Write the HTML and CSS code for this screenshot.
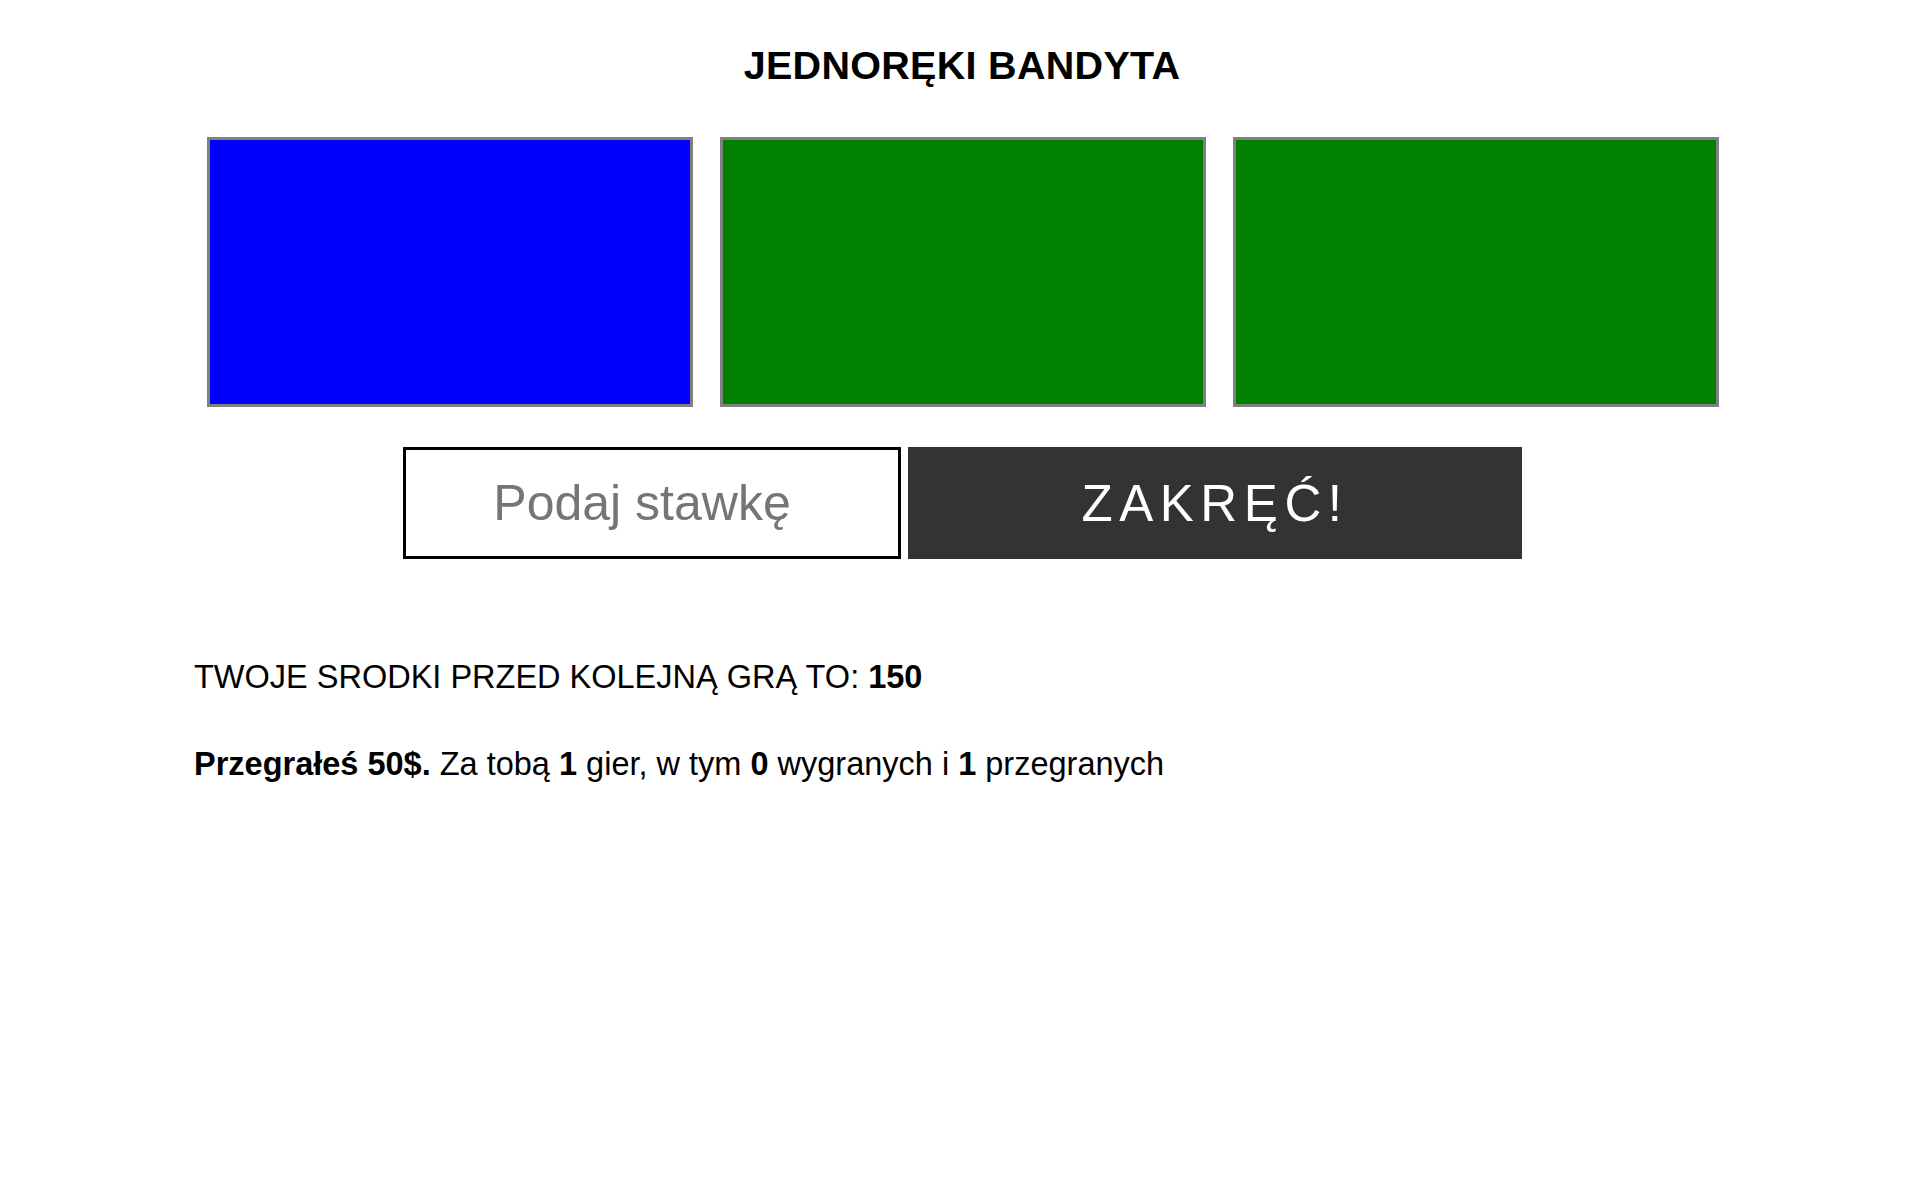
FILE: index.html
```html
<!DOCTYPE html>
<html lang="pl">
<head>
<meta charset="utf-8">
<title>Jednoręki bandyta</title>
<link rel="stylesheet" href="styles.css">
</head>
<body>
<h1 class="title">JEDNORĘKI BANDYTA</h1>
<div class="reels">
  <div class="reel reel-blue"></div>
  <div class="reel reel-green"></div>
  <div class="reel reel-green"></div>
</div>
<div class="controls">
  <input class="bet" type="text" placeholder="Podaj stawkę">
  <button class="spin">ZAKRĘĆ!</button>
</div>
<div class="stats">
  <p class="line">TWOJE SRODKI PRZED KOLEJNĄ GRĄ TO: <b>150</b></p>
  <p class="line"><b>Przegrałeś 50$.</b> Za tobą <b>1</b> gier, w tym <b>0</b> wygranych i <b>1</b> przegranych</p>
</div>
</body>
</html>
```
FILE: styles.css
```css
html, body {
  margin: 0;
  padding: 0;
  background: #ffffff;
}
body {
  font-family: "Liberation Sans", Arial, sans-serif;
  color: #000000;
}
.title {
  margin: 43px 0 0;
  padding-left: 4px;
  font-size: 39.5px;
  line-height: 44px;
  font-weight: bold;
  letter-spacing: 0.3px;
  text-align: center;
}
.reels {
  display: flex;
  justify-content: center;
  gap: 27px;
  margin-top: 50px;
  padding-left: 5px;
}
.reel {
  box-sizing: border-box;
  width: 486px;
  height: 270px;
  border: 3px solid #808080;
}
.reel-blue { background: #0000ff; }
.reel-green { background: #008000; }
.controls {
  display: flex;
  justify-content: center;
  gap: 7px;
  margin-top: 40px;
  padding-left: 5px;
}
.bet {
  box-sizing: border-box;
  width: 498px;
  height: 112px;
  border: 3px solid #000000;
  padding: 0 20px 0 0;
  margin: 0;
  font-family: "Liberation Sans", Arial, sans-serif;
  font-size: 50px;
  text-align: center;
  background: #ffffff;
  outline: none;
}
.bet::placeholder {
  color: #757575;
}
.spin {
  box-sizing: border-box;
  width: 614px;
  height: 112px;
  margin: 0;
  border: none;
  background: #333333;
  color: #ffffff;
  font-family: "Liberation Sans", Arial, sans-serif;
  font-size: 51px;
  letter-spacing: 6.6px;
  padding: 0;
}
.stats {
  margin-top: 100px;
  padding-left: 194px;
}
.line {
  margin: 0 0 50px;
  font-size: 32.5px;
  line-height: 37px;
}
```
